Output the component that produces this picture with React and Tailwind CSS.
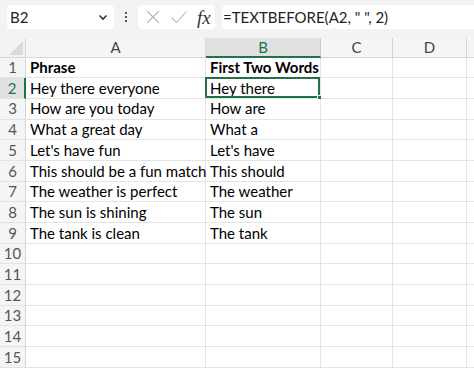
import React from 'react';

const cols = [
  { key: 'A', label: 'A', w: 'w-[180px]' },
  { key: 'B', label: 'B', w: 'w-[115px]' },
  { key: 'C', label: 'C', w: 'w-[72px]' },
  { key: 'D', label: 'D', w: 'w-[74px]' },
  { key: 'E', label: '', w: 'w-[60px]' },
];

const rows = [
  ['Phrase', 'First Two Words'],
  ['Hey there everyone', 'Hey there'],
  ['How are you today', 'How are'],
  ['What a great day', 'What a'],
  ["Let's have fun", "Let's have"],
  ['This should be a fun match', 'This should'],
  ['The weather is perfect', 'The weather'],
  ['The sun is shining', 'The sun'],
  ['The tank is clean', 'The tank'],
];

function FormulaBar() {
  return (
    <div className="flex h-[38px] items-start bg-[#f3f3f3] pt-[5px]">
      <div className="ml-[7px] flex h-[24px] w-[107px] items-center justify-between rounded-[4px] bg-white pl-[3px] pr-[6px]">
        <span className="text-[15px] text-[#222]">B2</span>
        <svg width="10" height="10" viewBox="0 0 10 10">
          <path d="M1.5 3.5 L5 7 L8.5 3.5" fill="none" stroke="#333" strokeWidth="1.6" />
        </svg>
      </div>
      <div className="flex h-[24px] w-[24px] flex-col items-center justify-center gap-[2px]">
        <span className="h-[2px] w-[2px] bg-[#555]" />
        <span className="h-[2px] w-[2px] bg-[#555]" />
        <span className="h-[2px] w-[2px] bg-[#555]" />
      </div>
      <div className="flex h-[24px] w-[77px] items-center rounded-[4px] bg-white pl-[7px]">
        <svg width="16" height="16" viewBox="0 0 16 16">
          <path d="M2 2 L14 14 M14 2 L2 14" stroke="#b5b5b5" strokeWidth="1.1" />
        </svg>
        <svg className="ml-[9px]" width="18" height="16" viewBox="0 0 18 16">
          <path d="M1.5 8.5 L6.5 13.5 L16.5 2.5" fill="none" stroke="#b5b5b5" strokeWidth="1.1" />
        </svg>
        <span className="ml-[9px] font-['Liberation_Serif',serif] text-[19px] italic leading-none text-[#333]">fx</span>
      </div>
      <div className="ml-[7px] flex h-[24px] flex-1 items-center rounded-l-[4px] bg-white pl-[1px]">
        <span className="text-[15px] text-[#222]">=TEXTBEFORE(A2, " ", 2)</span>
      </div>
    </div>
  );
}

function HeaderRow() {
  return (
    <div className="flex h-[19.5px]">
      <div className="relative h-full w-[26px] shrink-0 border-r border-b border-[#d6d6d6] bg-[#f3f3f3]">
        <svg className="absolute bottom-[2px] right-[2px]" width="14" height="14" viewBox="0 0 14 14">
          <path d="M14 0 L14 14 L0 14 Z" fill="#dadada" />
        </svg>
      </div>
      {cols.map((c) =>
        c.key === 'B' ? (
          <div
            key={c.key}
            className={`${c.w} flex h-full shrink-0 items-center justify-center border-r border-b-2 border-r-[#c8c8c8] border-b-[#217346] bg-[#e1e1e1] text-[15px] text-[#217346]`}
          >
            {c.label}
          </div>
        ) : (
          <div
            key={c.key}
            className={`${c.w} flex h-full shrink-0 items-center justify-center border-r border-b border-[#d6d6d6] bg-[#f5f5f5] text-[15px] text-[#444]`}
          >
            {c.label}
          </div>
        )
      )}
    </div>
  );
}

function Row({ n, data }) {
  const selected = n === 2;
  return (
    <div className="flex h-[20.7px]">
      <div
        className={`flex h-full w-[26px] shrink-0 items-center justify-center border-b border-[#e3e3e3] text-[15px] ${
          selected
            ? 'border-r-2 border-r-[#217346] bg-[#e1e1e1] text-[#217346]'
            : 'border-r border-r-[#d6d6d6] bg-[#f5f5f5] text-[#555]'
        }`}
      >
        {n}
      </div>
      {cols.map((c, i) => (
        <div
          key={c.key}
          className={`${c.w} relative flex h-full shrink-0 items-center overflow-visible whitespace-nowrap border-r border-b border-[#e3e3e3] pl-[4px] text-[15px] text-black ${
            n === 1 ? 'font-bold' : ''
          }`}
        >
          {data && data[i]}
          {selected && c.key === 'B' && (
            <div className="pointer-events-none absolute -left-px -top-px bottom-0 right-0 border-2 border-[#217346]">
              <span className="absolute -bottom-[4px] -right-[4px] h-[5px] w-[5px] border border-white bg-[#217346]" />
            </div>
          )}
        </div>
      ))}
    </div>
  );
}

export default function App() {
  const all = Array.from({ length: 15 }, (_, i) => i + 1);
  return (
    <div className="h-[368px] w-[474px] overflow-hidden bg-white font-['Lato',sans-serif]">
      <FormulaBar />
      <HeaderRow />
      {all.map((n) => (
        <Row key={n} n={n} data={rows[n - 1]} />
      ))}
    </div>
  );
}
